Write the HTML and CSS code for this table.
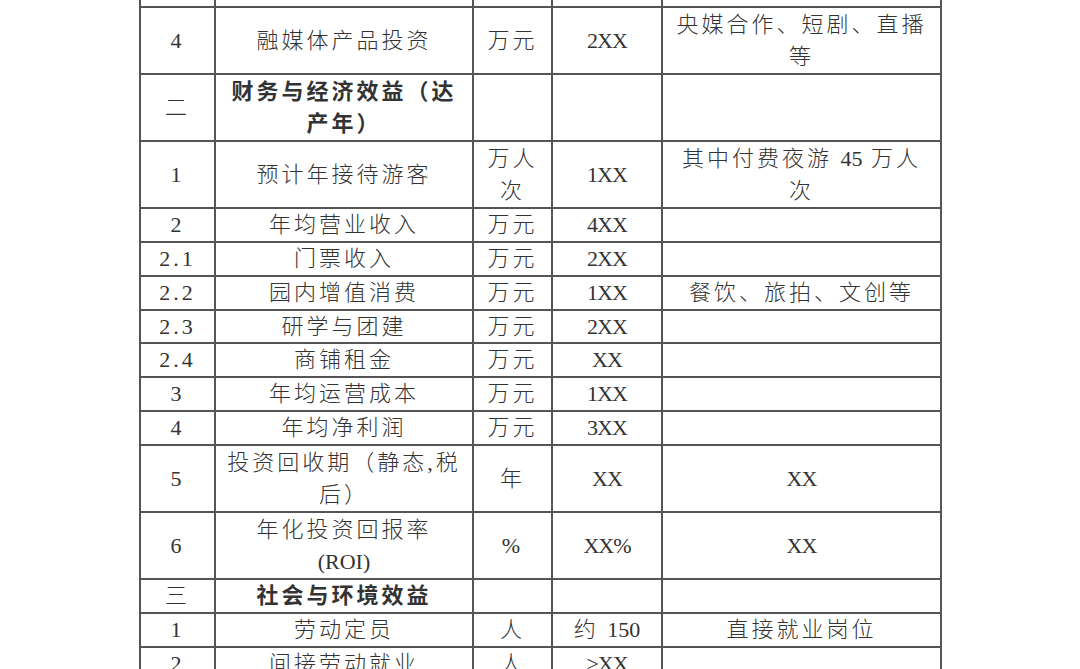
FILE: index.html
```html
<!DOCTYPE html>
<html lang="zh-CN">
<head>
<meta charset="utf-8">
<title>效益指标表</title>
<link rel="stylesheet" href="styles.css">
</head>
<body>
<div class="page">
<table class="sheet">
<colgroup>
<col class="c1"><col class="c2"><col class="c3"><col class="c4"><col class="c5">
</colgroup>
<tbody>
<tr class="tall"><td>3</td><td>文旅配套设施投资</td><td>万元</td><td class="n">1XX</td><td class="low">研学、科普、夜游<br>体验</td></tr>
<tr class="tall"><td>4</td><td>融媒体产品投资</td><td>万元</td><td class="n">2XX</td><td>央媒合作、短剧、直播<br>等</td></tr>
<tr class="tall"><td>二</td><td class="b">财务与经济效益（达<br>产年）</td><td></td><td></td><td></td></tr>
<tr class="tall"><td>1</td><td>预计年接待游客</td><td>万人<br>次</td><td class="n">1XX</td><td>其中付费夜游 <span class="lat">45</span> 万人<br>次</td></tr>
<tr><td>2</td><td>年均营业收入</td><td>万元</td><td class="n">4XX</td><td></td></tr>
<tr><td>2.1</td><td>门票收入</td><td>万元</td><td class="n">2XX</td><td></td></tr>
<tr><td>2.2</td><td>园内增值消费</td><td>万元</td><td class="n">1XX</td><td>餐饮、旅拍、文创等</td></tr>
<tr><td>2.3</td><td>研学与团建</td><td>万元</td><td class="n">2XX</td><td></td></tr>
<tr><td>2.4</td><td>商铺租金</td><td>万元</td><td class="n">XX</td><td></td></tr>
<tr><td>3</td><td>年均运营成本</td><td>万元</td><td class="n">1XX</td><td></td></tr>
<tr><td>4</td><td>年均净利润</td><td>万元</td><td class="n">3XX</td><td></td></tr>
<tr class="tall"><td>5</td><td>投资回收期（静态,税<br>后）</td><td>年</td><td class="n">XX</td><td class="n">XX</td></tr>
<tr class="tall"><td>6</td><td>年化投资回报率<br><span class="lat">(ROI)</span></td><td>%</td><td class="n">XX%</td><td class="n">XX</td></tr>
<tr><td>三</td><td class="b">社会与环境效益</td><td></td><td></td><td></td></tr>
<tr><td>1</td><td>劳动定员</td><td>人</td><td>约 <span class="lat">150</span></td><td>直接就业岗位</td></tr>
<tr><td>2</td><td>间接劳动就业</td><td>人</td><td class="n">&gt;XX</td><td></td></tr>
</tbody>
</table>
</div>
</body>
</html>
```

FILE: styles.css
```css
html, body {
  margin: 0;
  padding: 0;
  background: #ffffff;
}

.page {
  width: 1080px;
  height: 669px;
  overflow: hidden;
  background: #ffffff;
}

.sheet {
  border-collapse: collapse;
  table-layout: fixed;
  width: 801px;
  margin: -61px 0 0 139px;
  font-family: "Liberation Serif", "Noto Sans CJK SC", serif;
  font-size: 22px;
  font-weight: 300;
  color: #333333;
  letter-spacing: 3px;
}

.c1 { width: 75px; }
.c2 { width: 258px; }
.c3 { width: 79px; }
.c4 { width: 110px; }
.c5 { width: 279px; }

.sheet td {
  border: 2px solid #555555;
  padding: 0 5px;
  line-height: 31.86px;
  height: 31.86px;
  text-align: center;
  vertical-align: middle;
  white-space: nowrap;
}

.sheet tr.tall td {
  height: 65px;
  line-height: 32px;
}

.sheet td.low {
  vertical-align: bottom;
  line-height: 28px;
}

.sheet td.n {
  letter-spacing: -1px;
}

.sheet .lat {
  letter-spacing: 0;
}

.sheet td.b {
  font-weight: 700;
}
```
